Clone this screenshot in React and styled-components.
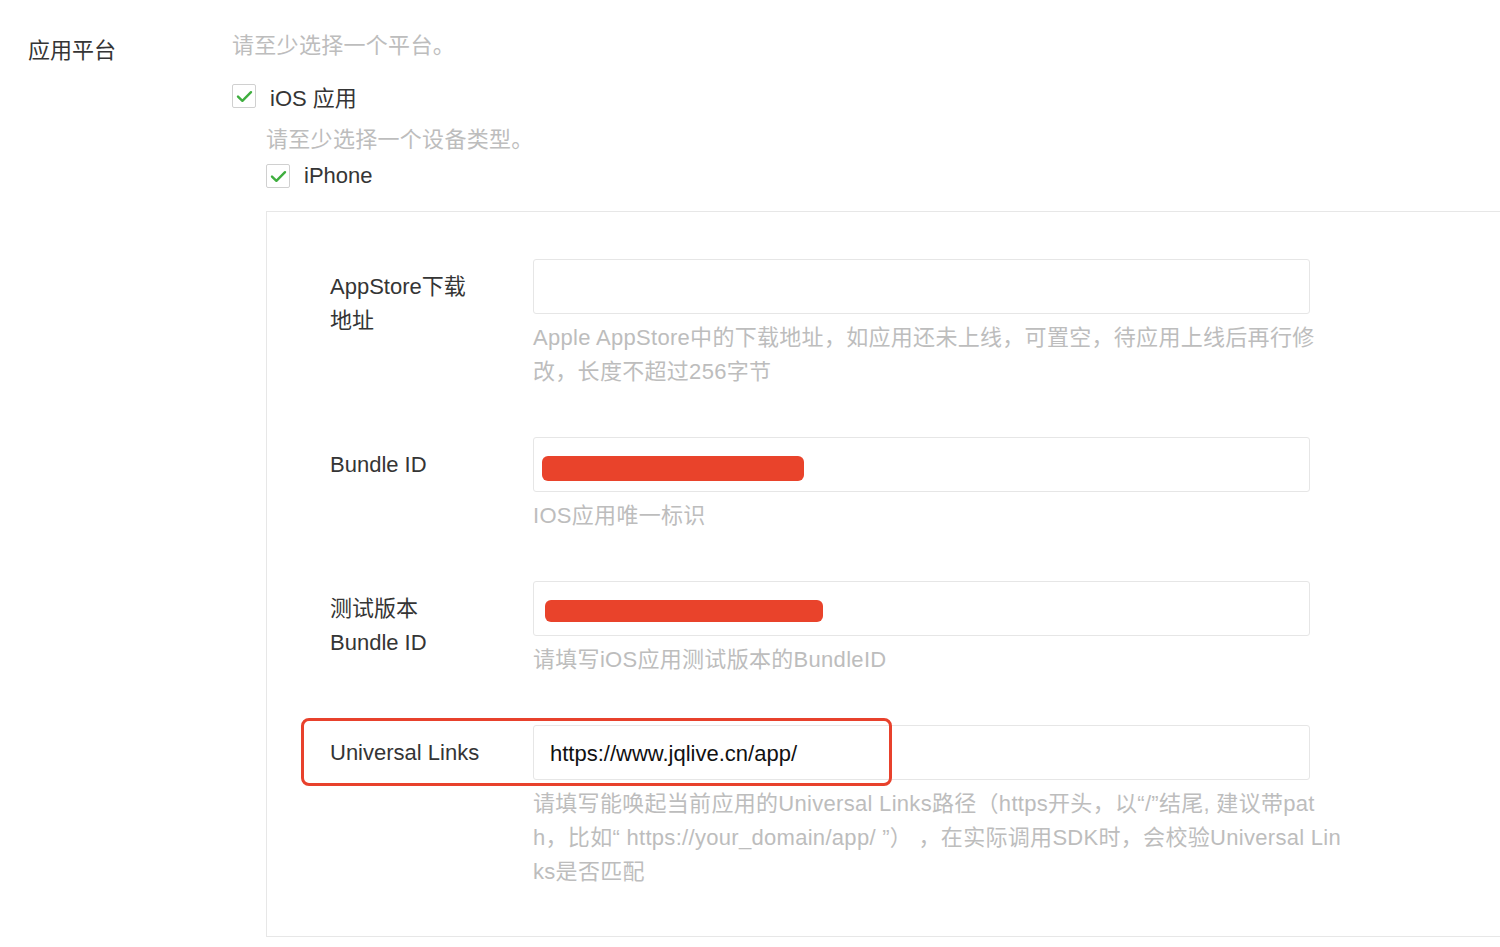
import React from 'react'
import styled, { createGlobalStyle } from 'styled-components'

const GlobalStyle = createGlobalStyle`
  html, body {
    margin: 0;
    padding: 0;
    background: #fff;
    overflow: hidden;
  }
  body {
    font-family: "Liberation Sans", "Noto Sans CJK SC", sans-serif;
    color: #353535;
  }
`

const Page = styled.div`
  display: flex;
  width: 1500px;
  padding: 29px 0 0 28px;
  box-sizing: border-box;
`

const SectionLabel = styled.div`
  width: 204px;
  flex-shrink: 0;
  font-size: 22px;
  line-height: 34px;
  padding-top: 5px;
  color: #353535;
`

const SectionBody = styled.div`
  flex: 1;
  min-width: 0;
`

const Tip = styled.div`
  font-size: 22px;
  line-height: 34px;
  letter-spacing: 0.3px;
  color: #bdbdbd;
  margin-top: ${p => p.$top || 0}px;
  white-space: nowrap;
`

const CheckRow = styled.label`
  display: flex;
  align-items: center;
  gap: 14px;
  height: 34px;
  margin-top: ${p => p.$top || 0}px;
  font-size: 22px;
  color: #353535;
`

const Box = styled.span`
  width: 22px;
  height: 22px;
  border: 1px solid #d0d0d0;
  border-radius: 2px;
  display: flex;
  align-items: center;
  justify-content: center;
  background: #fff;
`

const Nested = styled.div`
  margin-left: 34px;
`

const Panel = styled.div`
  margin-top: 18px;
  border: 1px solid #e7e7e7;
  border-right: none;
  padding: 47px 0 47px 63px;
  display: flex;
  flex-direction: column;
  gap: 48px;
`

const Row = styled.div`
  position: relative;
  display: flex;
`

const FieldLabel = styled.div`
  width: 203px;
  flex-shrink: 0;
  font-size: 22px;
  line-height: 34px;
  padding-top: 11px;
  color: #353535;
`

const Field = styled.div`
  width: 777px;
`

const InputBox = styled.div`
  height: 55px;
  box-sizing: border-box;
  border: 1px solid #e6e6e6;
  border-radius: 3px;
  display: flex;
  align-items: center;
  padding-left: 16px;
  padding-top: 2px;
  font-size: 22px;
  color: #111;
  background: #fff;
`

const Redact = styled.span`
  display: block;
  background: #e9432b;
  border-radius: 6px;
  width: ${p => p.$w}px;
  height: ${p => p.$h}px;
  margin-left: ${p => p.$x - 16}px;
  margin-top: ${p => p.$y - 2}px;
`

const Hint = styled.div`
  margin-top: 7px;
  font-size: 22px;
  line-height: 34px;
  letter-spacing: 0.3px;
  color: #bdbdbd;
  white-space: nowrap;
`

const Highlight = styled.div`
  position: absolute;
  left: -29px;
  top: -7px;
  width: 591px;
  height: 68px;
  box-sizing: border-box;
  border: 3px solid #e8412c;
  border-radius: 8px;
  pointer-events: none;
`

const Check = () => (
  <svg width="17" height="13" viewBox="0 0 17 13">
    <path d="M2 6.6 L6.4 10.8 L15 2.2" fill="none" stroke="#3fae3f" strokeWidth="2.4" strokeLinecap="round" strokeLinejoin="round" />
  </svg>
)

const fields = [
  {
    label: ['AppStore下载', '地址'],
    hint: ['Apple AppStore中的下载地址，如应用还未上线，可置空，待应用上线后再行修', '改，长度不超过256字节'],
  },
  {
    label: ['Bundle ID'],
    redact: { w: 262, h: 25, x: 8, y: 7 },
    hint: ['IOS应用唯一标识'],
  },
  {
    label: ['测试版本', 'Bundle ID'],
    redact: { w: 278, h: 22, x: 11, y: 5 },
    hint: ['请填写iOS应用测试版本的BundleID'],
  },
  {
    label: ['Universal Links'],
    value: 'https://www.jqlive.cn/app/',
    highlight: true,
    hint: [
      '请填写能唤起当前应用的Universal Links路径（https开头，以“/”结尾, 建议带pat',
      'h，比如“ https://your_domain/app/ ”） ，在实际调用SDK时，会校验Universal Lin',
      'ks是否匹配',
    ],
  },
]

const App = () => {
  return (
    <>
      <GlobalStyle />
      <Page>
        <SectionLabel>应用平台</SectionLabel>
        <SectionBody>
          <Tip>请至少选择一个平台。</Tip>
          <CheckRow $top={16}>
            <Box><Check /></Box>
            iOS 应用
          </CheckRow>
          <Nested>
            <Tip $top={10}>请至少选择一个设备类型。</Tip>
            <CheckRow $top={2}>
              <Box><Check /></Box>
              iPhone
            </CheckRow>
            <Panel>
              {fields.map((f, i) => (
                <Row key={i}>
                  <FieldLabel>
                    {f.label.map((l, j) => <div key={j}>{l}</div>)}
                  </FieldLabel>
                  <Field>
                    <InputBox>
                      {f.redact && <Redact $w={f.redact.w} $h={f.redact.h} $x={f.redact.x} $y={f.redact.y} />}
                      {f.value}
                    </InputBox>
                    <Hint>
                      {f.hint.map((h, j) => <div key={j}>{h}</div>)}
                    </Hint>
                  </Field>
                  {f.highlight && <Highlight />}
                </Row>
              ))}
            </Panel>
          </Nested>
        </SectionBody>
      </Page>
    </>
  )
}

export default App
